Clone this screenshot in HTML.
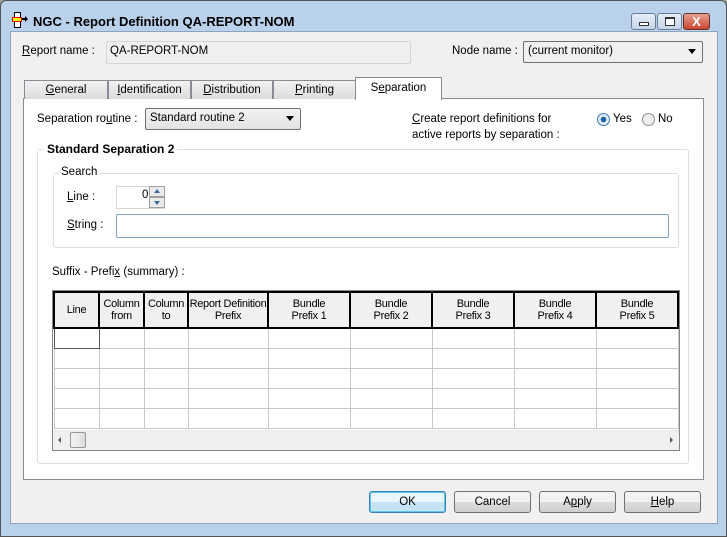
<!DOCTYPE html>
<html><head><style>
*{box-sizing:border-box;margin:0;padding:0}
body{width:727px;height:537px;background:#a0a0a0;font-family:"Liberation Sans",sans-serif;font-size:11px;color:#000;position:relative;overflow:hidden}
.a{position:absolute}
.win{left:0;top:0;width:727px;height:537px;background:#b9d1ea;border:1px solid #555;border-radius:6px 6px 0 0}
.client{left:10px;top:31px;width:708px;height:493px;background:#f0f0f0;border:1px solid #8ea3bd}
.t{position:absolute;white-space:nowrap;font-size:11.5px}
.u{text-decoration:underline}
.combo{position:absolute;background:linear-gradient(#f2f2f2,#e3e3e3);border:1px solid #707070;border-radius:2px}
.arr{position:absolute;right:6px;top:7px;width:0;height:0;border-left:4px solid transparent;border-right:4px solid transparent;border-top:5px solid #000}
.tab{position:absolute;top:80px;height:19px;background:linear-gradient(#f2f2f2,#dcdcdc);border:1px solid #898c95;border-bottom:none;text-align:center;line-height:18px;font-size:11.5px}
.btn{position:absolute;top:491px;width:77px;height:22px;border:1px solid #707070;border-radius:3px;background:linear-gradient(#f2f2f2 50%,#dddddd 50%,#cfcfcf);text-align:center;line-height:20px;font-size:11.5px}
.grp{position:absolute;border:1px solid #d5dfe5;border-radius:3px}
.gw{position:absolute;left:53px;top:291px;width:626px;height:139px;overflow:hidden}
table{border-collapse:collapse;position:absolute;left:0;top:0;table-layout:fixed;width:680px}
td{border:1px solid #c8c8c8;height:20px;background:#fff;padding:0}
th{border:2px solid #000;background:#f0f0f0;font-weight:normal;font-size:11px;line-height:12px;height:36px;padding:0;overflow:hidden;white-space:nowrap;letter-spacing:-0.3px}
</style></head><body>
<div class="a win"></div>
<div class="a" style="left:14px;top:12px;width:7px;height:16px;border:1px solid #000;background:#fff"></div>
<div class="a" style="left:12px;top:17px;width:10px;height:5px;border:1px solid #d00;background:#ff0"></div>
<div class="a" style="left:22px;top:18px;width:4px;height:2px;background:#000"></div>
<div class="a" style="left:25px;top:16px;border-left:3px solid #000;border-top:3px solid transparent;border-bottom:3px solid transparent"></div>
<div class="t" style="left:33px;top:14px;font-weight:bold;font-size:13px">NGC - Report Definition QA-REPORT-NOM</div>
<div class="a" style="left:631px;top:13px;width:25px;height:17px;border:1px solid #6a7d96;border-radius:3px;background:linear-gradient(#e6eef8,#c5d5e8)"><div class="a" style="left:7px;top:8px;width:10px;height:4px;border:1px solid #333;background:#fff"></div></div>
<div class="a" style="left:657px;top:13px;width:25px;height:17px;border:1px solid #6a7d96;border-radius:3px;background:linear-gradient(#e6eef8,#c5d5e8)"><div class="a" style="left:7px;top:3px;width:10px;height:9px;border:1px solid #333;border-top-width:2px;background:#fff"></div></div>
<div class="a" style="left:683px;top:13px;width:27px;height:17px;border:1px solid #6a3028;border-radius:3px;background:linear-gradient(#e8a090,#c8452e);color:#fff;font-weight:bold;text-align:center;line-height:15px;font-size:13px">X</div>
<div class="a client"></div>

<div class="t" style="left:22px;top:45px"><span class="u">R</span>eport name :</div>
<div class="a" style="left:106px;top:41px;width:305px;height:23px;background:#f0f0f0;border:1px solid #d5d5d5;border-radius:2px"></div>
<div class="t" style="left:110px;top:45px">QA-REPORT-NOM</div>
<div class="t" style="left:452px;top:45px">Node name :</div>
<div class="combo" style="left:523px;top:41px;width:180px;height:22px;background:#f0f0f0"><div class="t" style="left:4px;top:3px">(current monitor)</div><div class="arr"></div></div>

<div class="a" style="left:23px;top:98px;width:681px;height:382px;background:#fff;border:1px solid #898c95"></div>
<div class="tab" style="left:24px;width:84px"><span class="u">G</span>eneral</div>
<div class="tab" style="left:108px;width:83px"><span class="u">I</span>dentification</div>
<div class="tab" style="left:191px;width:82px"><span class="u">D</span>istribution</div>
<div class="tab" style="left:273px;width:83px"><span class="u">P</span>rinting</div>
<div class="tab" style="left:355px;top:77px;width:87px;height:23px;background:#fff;line-height:20px">S<span class="u">e</span>paration</div>

<div class="t" style="left:37px;top:113px">Separation ro<span class="u">u</span>tine :</div>
<div class="combo" style="left:145px;top:108px;width:156px;height:22px"><div class="t" style="left:4px;top:3px">Standard routine 2</div><div class="arr"></div></div>
<div class="t" style="left:412px;top:113px"><span class="u">C</span>reate report definitions for</div>
<div class="t" style="left:412px;top:129px">active reports by separation :</div>
<div class="a" style="left:597px;top:113px;width:13px;height:13px;border-radius:50%;border:1px solid #3c7fb1;background:radial-gradient(#1d5fa0 2.5px,#dfeaf5 3px)"></div>
<div class="t" style="left:613px;top:113px">Yes</div>
<div class="a" style="left:642px;top:113px;width:13px;height:13px;border-radius:50%;border:1px solid #8e8f8f;background:#eee"></div>
<div class="t" style="left:658px;top:113px">No</div>

<div class="grp" style="left:37px;top:149px;width:652px;height:315px"></div>
<div class="t" style="left:44px;top:142px;background:#fff;padding:0 3px;font-weight:bold;font-size:12px">Standard Separation 2</div>
<div class="grp" style="left:53px;top:173px;width:626px;height:75px"></div>
<div class="t" style="left:59px;top:166px;background:#fff;padding:0 2px">Search</div>
<div class="t" style="left:67px;top:191px"><span class="u">L</span>ine :</div>
<div class="a" style="left:116px;top:186px;width:49px;height:23px;background:#fff;border:1px solid #d5d5d5;border-right:none"></div>
<div class="t" style="left:142px;top:189px">0</div>
<div class="a" style="left:149px;top:186px;width:16px;height:11px;border:1px solid #a0a0a0;background:#eaeaea"><div class="a" style="left:4px;top:2px;border-left:3px solid transparent;border-right:3px solid transparent;border-bottom:4px solid #3c6ea0"></div></div>
<div class="a" style="left:149px;top:197px;width:16px;height:11px;border:1px solid #a0a0a0;background:#eaeaea"><div class="a" style="left:4px;top:3px;border-left:3px solid transparent;border-right:3px solid transparent;border-top:4px solid #3c6ea0"></div></div>
<div class="t" style="left:67px;top:219px"><span class="u">S</span>tring :</div>
<div class="a" style="left:116px;top:214px;width:553px;height:24px;background:#fff;border:1px solid #7ea4c8;border-radius:2px"></div>
<div class="t" style="left:52px;top:266px">Suffix - Prefi<span class="u">x</span> (summary) :</div>

<div class="a" style="left:52px;top:290px;width:628px;height:161px;border:1px solid #828790;background:#fff"></div>
<div class="gw">
<table>
<colgroup><col style="width:45px"><col style="width:45px"><col style="width:44px"><col style="width:80px"><col style="width:82px"><col style="width:82px"><col style="width:82px"><col style="width:82px"><col style="width:82px"><col style="width:56px"></colgroup>
<tr><th>Line</th><th>Column<br>from</th><th>Column<br>to</th><th>Report Definition<br>Prefix</th><th>Bundle<br>Prefix 1</th><th>Bundle<br>Prefix 2</th><th>Bundle<br>Prefix 3</th><th>Bundle<br>Prefix 4</th><th>Bundle<br>Prefix 5</th><th></th></tr>
<tr><td style="border:1px solid #555"></td><td></td><td></td><td></td><td></td><td></td><td></td><td></td><td></td><td></td></tr>
<tr><td></td><td></td><td></td><td></td><td></td><td></td><td></td><td></td><td></td><td></td></tr>
<tr><td></td><td></td><td></td><td></td><td></td><td></td><td></td><td></td><td></td><td></td></tr>
<tr><td></td><td></td><td></td><td></td><td></td><td></td><td></td><td></td><td></td><td></td></tr>
<tr><td></td><td></td><td></td><td></td><td></td><td></td><td></td><td></td><td></td><td></td></tr>
</table>
</div>
<div class="a" style="left:53px;top:430px;width:626px;height:20px;background:#f0f0f0;border-top:1px solid #e6e6e6"></div>
<div class="a" style="left:58px;top:437px;border-right:3px solid #555;border-top:3px solid transparent;border-bottom:3px solid transparent"></div>
<div class="a" style="left:70px;top:432px;width:16px;height:16px;border:1px solid #999;border-radius:2px;background:linear-gradient(90deg,#f4f4f4,#dcdcdc)"></div>
<div class="a" style="left:670px;top:437px;border-left:3px solid #555;border-top:3px solid transparent;border-bottom:3px solid transparent"></div>

<div class="btn" style="left:369px;border-color:#3c7fb1;box-shadow:inset 0 0 0 1px #5fc8f0;background:linear-gradient(#eaf6fd 50%,#c4e4f5 50%)">OK</div>
<div class="btn" style="left:454px">Cancel</div>
<div class="btn" style="left:539px">A<span class="u">p</span>ply</div>
<div class="btn" style="left:624px"><span class="u">H</span>elp</div>
</body></html>
